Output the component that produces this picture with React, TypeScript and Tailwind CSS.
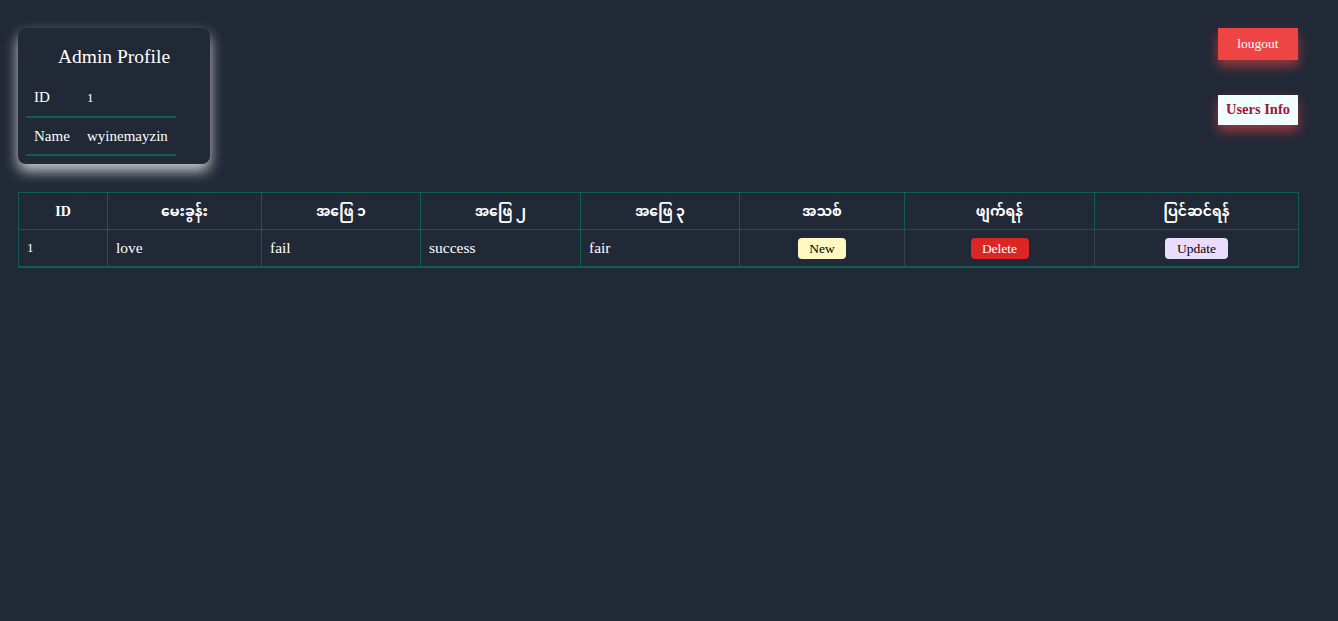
import React from 'react';

const serif = { fontFamily: '"Liberation Serif", "Noto Sans Myanmar", "Padauk", serif' };

const headers = ['ID', 'မေးခွန်း', 'အဖြေ ၁', 'အဖြေ ၂', 'အဖြေ ၃', 'အသစ်', 'ဖျက်ရန်', 'ပြင်ဆင်ရန်'];
const widths = ['w-[89px]', 'w-[154px]', 'w-[159px]', 'w-[160px]', 'w-[159px]', 'w-[165px]', 'w-[190px]', 'w-[204px]'];

const App = () => {
    return (
        <div className="min-h-screen bg-[#212937] text-white pl-[18px] pr-[40px] pt-[28px]" style={serif}>
            <div className="flex justify-between items-start">
                <div className="w-[192px] h-[136px] rounded-lg bg-[#212937] shadow-[0_7px_14px_rgba(255,255,255,0.75)] px-2 pt-[17px]">
                    <h2 className="text-center text-[19.5px] leading-6">Admin Profile</h2>
                    <table className="mt-[10px] w-[150px] text-[15px]">
                        <tbody>
                            <tr className="border-b-2 border-[#0f5e54] h-[38px]">
                                <td className="pl-2 w-[61px]">ID</td>
                                <td className="text-[13px]">1</td>
                            </tr>
                            <tr className="border-b-2 border-[#0f5e54] h-[38px]">
                                <td className="pl-2">Name</td>
                                <td className="whitespace-nowrap">wyinemayzin</td>
                            </tr>
                        </tbody>
                    </table>
                </div>
                <div className="flex flex-col items-end gap-[35px]">
                    <button className="w-[80px] h-[32px] bg-[#ef4444] text-white text-[13.5px] shadow-[0_6px_12px_rgba(239,68,68,0.6)]">
                        lougout
                    </button>
                    <button className="w-[80px] h-[30px] bg-[#f0fffd] text-[#a11439] font-bold text-[14.5px] shadow-[0_6px_12px_rgba(239,68,68,0.6)]">
                        Users Info
                    </button>
                </div>
            </div>

            <table className="mt-[28px] w-[1280px] table-fixed border border-[#0f5e54] border-b-2 text-[15.5px]">
                <colgroup>
                    {widths.map((w, i) => (
                        <col key={i} className={w} />
                    ))}
                </colgroup>
                <thead>
                    <tr className="h-[37px]">
                        {headers.map((h, i) => (
                            <th key={i} className={`font-bold text-center text-[14px] border ${i >= 5 ? 'border-x-[#0f5e54] border-b-[#374151] border-t-[#0f5e54]' : 'border-[#0f5e54]'}`}>
                                {h}
                            </th>
                        ))}
                    </tr>
                </thead>
                <tbody>
                    <tr className="h-[37px]">
                        <td className="px-2 border-r border-[#0f5e54] text-[13px]">1</td>
                        <td className="px-2 border-r border-[#0f5e54]">love</td>
                        <td className="px-2 border-r border-[#0f5e54]">fail</td>
                        <td className="px-2 border-r border-[#0f5e54]">success</td>
                        <td className="px-2 border-r border-[#0f5e54]">fair</td>
                        <td className="px-2 border-r border-[#374151] text-center">
                            <span className="inline-block w-[48px] h-[21px] leading-[21px] rounded bg-[#fef9c3] text-black text-[13.5px]">New</span>
                        </td>
                        <td className="px-2 border-r border-[#374151] text-center">
                            <span className="inline-block w-[58px] h-[21px] leading-[21px] rounded bg-[#dc2626] text-white text-[13.5px]">Delete</span>
                        </td>
                        <td className="px-2 text-center">
                            <span className="inline-block w-[63px] h-[21px] leading-[21px] rounded bg-[#ebdbff] text-black text-[13.5px]">Update</span>
                        </td>
                    </tr>
                </tbody>
            </table>
        </div>
    );
};

export default App;
